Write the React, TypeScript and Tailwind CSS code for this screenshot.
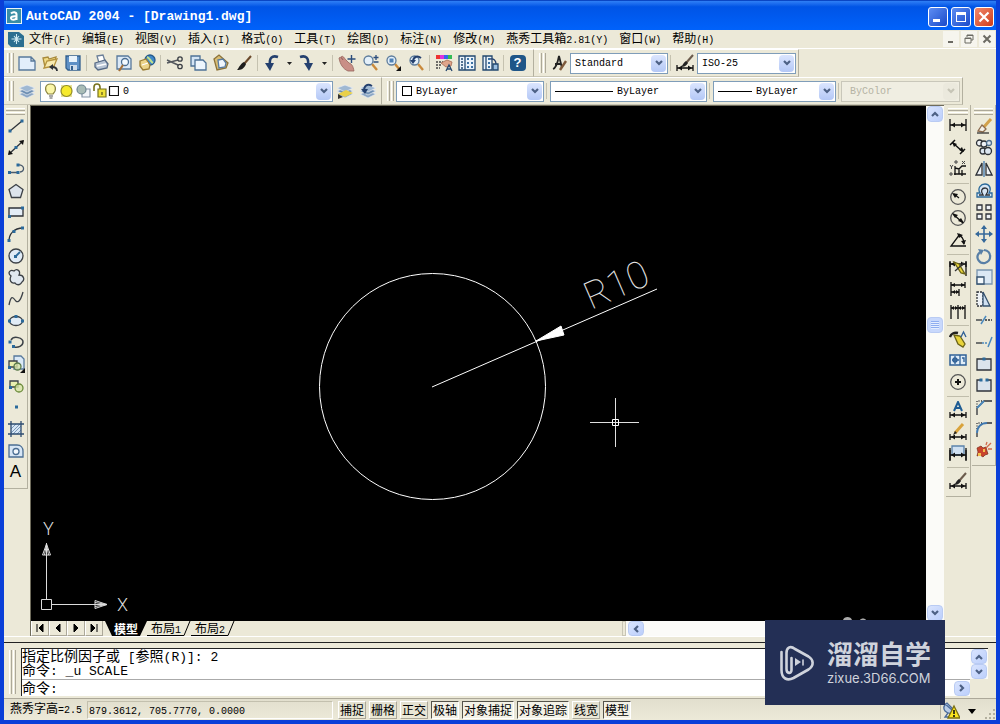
import type {ReactNode} from "react";

type Tool = {label: string; art: ReactNode;};

const INK = "#2e3238";
const BLUE = "#2b6a9b";
const PALE = "#d7e6f5";

const mono = "font-['Liberation_Mono','Noto_Sans_CJK_SC',monospace]";
const cjk = "font-['Noto_Sans_CJK_SC',sans-serif]";

/* latin is set in a 10px mono face so two letters are as wide as one 12px hanzi */
function Mixed({text, latin = "text-[10px]"}: {text: string; latin?: string;})
{
    return(
        <>
            {text.split(/([\x20-\x7e]+)/).map((part, i) => (
                i % 2 ? <span key={i} className={`whitespace-pre font-['Liberation_Mono',monospace] ${latin}`}>{part}</span> : part
            ))}
        </>
    );
}

function Art({children}: {children: ReactNode;})
{
    return(
        <svg viewBox="0 0 18 18" className="size-[18px] shrink-0" fill="none" stroke={INK} strokeWidth="1.3" aria-hidden="true">
            {children}
        </svg>
    );
}

function Dot({x, y}: {x: number; y: number;})
{
    return <rect x={x - 1.5} y={y - 1.5} width="3" height="3" fill={BLUE} stroke="none"/>;
}

/* horizontal dimension line with end ticks, shared by the dimension tools */
function DimLine({y, x1 = 1, x2 = 17, h = 3}: {y: number; x1?: number; x2?: number; h?: number;})
{
    return(
        <g stroke="#111">
            <path d={`M${x1} ${y - h}V${y + h}M${x2} ${y - h}V${y + h}M${x1} ${y}H${x2}`}/>
            <path d={`M${x1 + 1} ${y}l4 -2.500v5zM${x2 - 1} ${y}l-4 -2.500v5z`} fill="#111" stroke="none"/>
        </g>
    );
}

const glass = (
    <>
        <path d="M11 10l5 6" stroke="#c98a3c" strokeWidth="2.400"/>
        <circle cx="7.500" cy="6.500" r="4.500" fill="#e4f0fa" stroke="#5d7c9c"/>
    </>
);

const brush = (
    <>
        <path d="M16 2l-7 8" stroke="#6b4a2c" strokeWidth="2"/>
        <path d="M9 8l2 2c-2 5-5 6-9 6c2-2 3-6 7-8z" fill="#1d1d1d" stroke="none"/>
    </>
);

const layers = (
    <>
        <path d="M1 12l8-3 8 3-8 4z" fill="#8aa6c4" stroke="#e9eef4" strokeWidth="0.700"/>
        <path d="M1 9l8-3 8 3-8 4z" fill="#6e8fb3" stroke="#e9eef4" strokeWidth="0.700"/>
        <path d="M1 6l8-3 8 3-8 4z" fill="#9fb8d2" stroke="#e9eef4" strokeWidth="0.700"/>
    </>
);

const fileTools: Tool[] = [
    {label: "新建", art: <path d="M1 3h12l4 4v9H1z M13 3v4h4" fill="#e2eefb" stroke="#58799c"/>},
    {label: "打开", art: <><path d="M2 4l5-1 1 2 7-2-2 9-9 1z" fill="#f1dc86" stroke="#a88a3c"/><path d="M3 14l3-7 10-2-3 7z" fill="#f7eab0" stroke="#b4923d"/><path d="M16 17c0-3-2-4-5-4" stroke={INK} strokeWidth="1.800"/><path d="M12 10v6l-4-3z" fill={INK} stroke="none"/></>},
    {label: "保存", art: <><path d="M2 2h14v14H4l-2-2z" fill="#5e90c6" stroke="#33608f"/><path d="M5 2h8v6H5z" fill="#e9f3fc" stroke="none"/><path d="M6 11h7v5H6z" fill="#cfdcea" stroke="none"/><path d="M7 12h2v4H7z" fill="#33608f" stroke="none"/></>},
];

const printTools: Tool[] = [
    {label: "打印", art: <><path d="M5 2l6-1 2 6-6 2z" fill="#fff" stroke="#6b7f99"/><path d="M3 9l10-3 3 4-1 4-9 2-3-3z" fill="#b7c4d4" stroke="#566a85"/><path d="M5 12l9-2" stroke="#fff"/></>},
    {label: "打印预览", art: <><path d="M2 2h11l3 3v10H2z" fill="#dbe9f7" stroke="#58799c"/><circle cx="10" cy="8" r="3.500" fill="#f4faff" stroke="#4b6e93"/><path d="M8 11l-4 6" stroke="#a5713b" strokeWidth="2.200"/></>},
    {label: "发布", art: <><circle cx="12" cy="6" r="5" fill="#3f87c8" stroke="#245a8c"/><path d="M9 3c3 1 3 4 6 6" stroke="#bfe08d" strokeWidth="2"/><path d="M2 7l6-2 4 6-1 4-6 1-3-4z" fill="#ecd48a" stroke="#9a7c34"/><path d="M4 11l6-2" stroke="#fff"/></>},
];

const editTools: Tool[] = [
    {label: "剪切", art: <><path d="M1 6l11 5M1 9l11-3" stroke="#54585e" strokeWidth="1.500"/><circle cx="14" cy="5" r="2.200" stroke="#3b3f45"/><circle cx="14" cy="12.500" r="2.200" stroke="#3b3f45"/></>},
    {label: "复制", art: <><path d="M2 2h9v10H2z" fill="#d3e4f5" stroke="#4d7196"/><path d="M6 6h8l3 3v7H6z" fill="#eef6fd" stroke="#4d7196"/></>},
    {label: "粘贴", art: <><path d="M2 5l5-4 9 8-2 5-9 2z" fill="#d9bd73" stroke="#8c7238"/><path d="M6 6l5-1 3 4-1 4-6 1z" fill="#f0f6fc" stroke="#587ba0"/></>},
    {label: "特性匹配", art: brush},
];

const undoArt = <><path d="M15 3c-6-2-9 1-8 8" stroke="#24406e" strokeWidth="2.600"/><path d="M2 9h9l-4 8z" fill="#24406e" stroke="none"/></>;
const redoArt = <><path d="M2 3c6-2 9 1 8 8" stroke="#24406e" strokeWidth="2.600"/><path d="M6 9h9l-4 8z" fill="#24406e" stroke="none"/></>;

const zoomTools: Tool[] = [
    {label: "实时平移", art: <><path d="M1 4c2-2 3 1 4 2l-2-3c2-2 3 1 5 3l3 3c3 1 4 3 5 8h-6c-5-2-8-7-9-13z" fill="#c98f86" stroke="#94625a" strokeWidth="0.800"/><path d="M13.500 1v8M9.500 5h8" stroke="#2b4d7c" strokeWidth="1.400"/></>},
    {label: "实时缩放", art: <>{glass}<path d="M15 1v5M12.500 3.500h5M12.500 8h5" stroke="#2b4d7c"/></>},
    {label: "窗口缩放", art: <>{glass}<path d="M5.500 4.500h4v4h-4z" fill="#4e82b8" stroke="none"/><path d="M17 12v5h-5z" fill="#111" stroke="none"/></>},
    {label: "缩放上一个", art: <>{glass}<path d="M14 4c-4-3-8-1-8 4" stroke="#24406e" strokeWidth="2"/><path d="M3 6h6l-3 4z" fill="#24406e" stroke="none"/></>},
];

const paletteTools: Tool[] = [
    {label: "特性", art: <><path d="M1 1h4v4H1z" fill="#e33" stroke="none"/><path d="M5 1h4v4H5z" fill="#d3d" stroke="none"/><path d="M9 1h4v4H9z" fill="#36e" stroke="none"/><path d="M13 1h4v4h-4z" fill="#3b5" stroke="none"/><path d="M1 8h7M1 11h6M1 14h4" stroke="#444" strokeDasharray="2 1"/><path d="M6 9l6-3 5 2-1 4-5 1z" fill="#dfa58b" stroke="#a56a52" strokeWidth="0.800"/><path d="M11 17l3-6 3 6M12 15h4" stroke="#25486f"/></>},
    {label: "设计中心", art: <><path d="M1 2h16v14H1z" fill="#eaf3fb" stroke="#22486f"/><path d="M7 2v14" stroke="#22486f"/><path d="M3 5h2M3 8h2M3 11h2M3 14h2" stroke="#22486f"/><path d="M9 5h2M13 5h2M9 9h2M13 9h2M9 13h2M13 13h2" stroke="#3d72a4" strokeWidth="2"/></>},
    {label: "工具选项板", art: <><path d="M2 2h9v14H2z" fill="#eaf3fb" stroke="#22486f"/><path d="M5 2v14" stroke="#22486f"/><path d="M7 5h2M7 9h2M7 13h2" stroke="#3d72a4" strokeWidth="2"/><path d="M9 5c4-1 6 2 6 5" stroke="#24406e"/><path d="M12 10h5v6h-5z" fill="#9cc0e2" stroke="#22486f"/></>},
];

const drawTools: Tool[] = [
    {label: "直线", art: <><path d="M3 14L15 4"/><Dot x={3} y={14}/><Dot x={15} y={4}/></>},
    {label: "构造线", art: <><path d="M2 16L16 3"/><path d="M1 17l1-5 4 4zM17 2l-5 1 4 4z" fill="#111" stroke="none"/><Dot x={9} y={9.5}/></>},
    {label: "多段线", art: <><path d="M2 12.500h9M11 5c7-1 7 7 2 7" stroke="#4a5a6c"/><Dot x={2.5} y={12.5}/><Dot x={11} y={12.5}/><Dot x={11} y={5}/></>},
    {label: "正多边形", art: <path d="M9 2.500l7 5-2.500 8h-9L2 7.500z" fill="#dde4ec" stroke="#3c4147"/>},
    {label: "矩形", art: <><path d="M2 5h14v8H2z" fill="#e4edf6"/><Dot x={2.5} y={13.5}/><Dot x={15.5} y={5}/></>},
    {label: "圆弧", art: <><path d="M2 16c0-7 5-13 14-13"/><Dot x={2} y={15.5}/><Dot x={7} y={6.5}/><Dot x={15.5} y={3}/></>},
    {label: "圆", art: <><circle cx="9" cy="9" r="7" fill="#e0ebf6" stroke="#3c4147"/><path d="M9 9l4-4" stroke={BLUE} strokeWidth="1.800"/><Dot x={8.5} y={9.5}/></>},
    {label: "修订云线", art: <path d="M4 8c-4-3-1-7 3-5c3-3 7 0 5 4c5 0 6 5 3 7c-2 4-6 3-7 1c-4 1-6-3-4-7z" fill="#e0e8f0" stroke="#3c4147"/>},
    {label: "样条曲线", art: <path d="M2 15c2-10 4-8 6-5s5 3 8-8" stroke="#3c4147"/>},
    {label: "椭圆", art: <><ellipse cx="9" cy="9" rx="6.500" ry="4.500" fill="#e0ebf6" stroke="#3c4147"/><Dot x={2.5} y={9}/><Dot x={9} y={4.5}/><Dot x={15.5} y={9}/></>},
    {label: "椭圆弧", art: <><path d="M4 7c3-5 12-2 12 2s-5 6-9 5" stroke="#3c4147" strokeWidth="1.500"/><Dot x={3} y={9}/><Dot x={6.5} y={13.5}/></>},
    {label: "插入块", art: <><path d="M7 1h7l3 3v10H7z" fill="#dbe9f7" stroke="#58799c"/><path d="M2 6h8v6H2z" fill="#e9efb0" stroke="#3c4147"/><circle cx="10.500" cy="11.500" r="3.500" fill="#d7e3a6" fillOpacity="0.800" stroke="#5a7a4a"/><Dot x={2.5} y={12.5}/><path d="M18 13v5h-5z" fill="#111" stroke="none"/></>},
    {label: "创建块", art: <><path d="M3 4h8v6H3z" fill="#e9efb0" stroke="#3c4147"/><circle cx="12" cy="11" r="4" fill="#d7e3a6" fillOpacity="0.800" stroke="#6a8a3a"/><Dot x={3.5} y={10.5}/></>},
    {label: "点", art: <Dot x={9.5} y={9}/>},
    {label: "图案填充", art: <><path d="M4 4h10v10H4z" fill={PALE} stroke="none"/><path d="M4 9l5-5M4 13l9-9M6 14l8-8M10 14l4-4" stroke="#6f90b2" strokeWidth="0.900"/><path d="M4 1v16M14 1v16M1 4h16M1 14h16" stroke="#2d4c70"/></>},
    {label: "面域", art: <><path d="M2 3h8c4 0 6 3 6 6v6H2z" fill={PALE} stroke="#4b6e93"/><circle cx="9" cy="9.500" r="3" fill="#f4f8fc" stroke="#4b6e93"/></>},
];

const dimGroups: Tool[][] = [
    [
        {label: "线性标注", art: <DimLine y={8} h={6}/>},
        {label: "对齐标注", art: <><path d="M4 5l10 9M1 7l5-5M11 16l5-5" stroke="#111" strokeWidth="1.500"/><path d="M3 4l5 2-3 3zM15 14l-5-2 3-3z" fill="#111" stroke="none"/></>},
        {label: "坐标标注", art: <><path d="M6 6v9M6 8l4 1 3-3h4M5 14h12M10 9v5M13 10v6" stroke="#111"/><path d="M1 5l1.500 2L4 5M2.500 7v2M13 1l3 3M16 1l-3 3M6 1h2v2H6zM1 13h2v2H1z" stroke="#444" strokeWidth="1"/></>},
    ],
    [
        {label: "半径标注", art: <><circle cx="9" cy="9" r="7.300" stroke="#555"/><path d="M5 6l5 4" stroke="#111"/><path d="M3 5l6 1-3 4z" fill="#111" stroke="none"/></>},
        {label: "直径标注", art: <><circle cx="9" cy="9" r="7.300" stroke="#555"/><path d="M4 5l10 9" stroke="#111"/><path d="M3 4l6 2-3 3zM15 14l-6-2 3-3z" fill="#111" stroke="none"/></>},
        {label: "角度标注", art: <><path d="M11 3L2 15h15" stroke="#111"/><path d="M9 4c4 1 6 5 6 9" stroke="#111"/><path d="M8 2l6 2-4 3zM15 14l-3-4 5-1z" fill="#111" stroke="none"/></>},
    ],
    [
        {label: "快速标注", art: <><DimLine y={5}/><path d="M1 3v14M17 3v14" stroke="#111"/><path d="M5 3l5 2 6 10-4-1z" fill="#e8d33a" stroke="#6b6318"/><path d="M15 4L6 12" stroke="#333"/></>},
        {label: "基线标注", art: <><path d="M2 2v14M16 2v6M10 9v7" stroke="#111"/><path d="M2 5h14M2 12h8" stroke="#111"/><path d="M2 5l4-2v4zM16 5l-4-2v4zM3 12l3-2v4zM10 12l-3-2v4z" fill="#111" stroke="none"/></>},
        {label: "连续标注", art: <><path d="M2 3v14M9 3v14M16 3v14" stroke="#111"/><path d="M2 6h14" stroke="#111"/><path d="M2 6l3-2v4zM9 6l-3-2v4zM9 6l3-2v4zM16 6l-3-2v4z" fill="#111" stroke="none"/></>},
    ],
    [
        {label: "快速引线", art: <><path d="M1 7c1-3 4-5 8-4" stroke="#222" strokeWidth="2.400"/><path d="M5 5l6 1 5 8-2 3-5-3z" fill="#e8d33a" stroke="#6b6318"/><path d="M12 7l2.500-5L17 7" stroke="#2f6096"/></>},
        {label: "公差", art: <><path d="M1 4h16v10H1z" fill="#e1edf8" stroke="#2f6096" strokeWidth="1.500"/><path d="M11 4v10M6 5v8M3 9h7M13 7h2v4" stroke="#2f6096"/><circle cx="6" cy="9" r="2" stroke="#2f6096"/></>},
        {label: "圆心标记", art: <><circle cx="9" cy="9" r="7.300" stroke="#555"/><path d="M9 6v6M6 9h6" stroke="#111" strokeWidth="2"/></>},
    ],
    [
        {label: "编辑标注", art: <><path d="M5 10l4-9 4 9M6.500 7h5" stroke="#1f5c93" strokeWidth="2"/><DimLine y={14}/></>},
        {label: "编辑标注文字", art: <><DimLine y={15}/><path d="M14 2L6 11" stroke="#d9a33c" strokeWidth="3"/><path d="M6 9l-2 4 4-2z" fill="#222" stroke="none"/></>},
        {label: "标注更新", art: <><path d="M3 2h12v9H3z" fill="#cfe0f1" stroke="#5b82aa"/><path d="M1 4v13M17 4v13" stroke="#111"/><DimLine y={11} h={5}/></>},
    ],
];

const dimStyleArt = <><DimLine y={14}/><path d="M17 1l-7 8" stroke="#6b5b4c" strokeWidth="2"/><path d="M10 7l2 2c-2 3-4 4-7 4c2-2 2-4 5-6z" fill="#222" stroke="none"/></>;

const modifyTools: Tool[] = [
    {label: "删除", art: <><path d="M16 2l-8 9" stroke="#d2a14b" strokeWidth="3"/><path d="M7 8l4 4-3 3-5-1z" fill="#f3f0e8" stroke="#8b6a4d"/><path d="M2 16h12" stroke="#333"/></>},
    {label: "复制对象", art: <><circle cx="4.500" cy="5" r="3" fill="#eef2f6"/><circle cx="9" cy="6" r="3" fill="#eef2f6"/><circle cx="14" cy="5" r="2.500" fill="#dde7f1" stroke="#51708f"/><circle cx="8" cy="13" r="3" fill="#dde7f1"/><circle cx="13" cy="13" r="3.500" fill="#dde7f1"/></>},
    {label: "镜像", art: <><path d="M7 3v12H1zM11 3v12h6z" fill="#eef2f6"/><path d="M9 1v16" stroke="#3f78b0"/></>},
    {label: "偏移", art: <><path d="M2 15v-4h3c-3-5 1-9 5-9s7 4 4 9h3v4z" fill={PALE} stroke={BLUE}/><path d="M4 13h4c-3-4-1-7 2-7s4 3 1 7h4"/></>},
    {label: "阵列", art: <path d="M2 2h5v5H2zM11 2h5v5h-5zM2 11h5v5H2zM11 11h5v5h-5z" fill="#eef2f6"/>},
    {label: "移动", art: <><path d="M9 2v14M2 9h14" stroke="#35689a" strokeWidth="1.600"/><path d="M9 0l3 4H6zM9 18l3-4H6zM0 9l4-3v6zM18 9l-4-3v6z" fill="#35689a" stroke="none"/></>},
    {label: "旋转", art: <><path d="M5 5c-6 6 0 12 5 11c7-2 7-12-1-13" stroke="#587fa6" strokeWidth="2.200"/><path d="M3 2l6 1-3 5z" fill="#587fa6" stroke="none"/></>},
    {label: "缩放", art: <><path d="M2 2h15v14H2z" fill="#dbe8f4" stroke="#7a95b0"/><path d="M2 9h7v7H2z" fill="#f3f8fc" stroke="#35516e"/></>},
    {label: "拉伸", art: <><path d="M2 2h6v14H2z" fill="#eef2f6" strokeDasharray="2 1"/><path d="M8 2l7 14H8z" fill="#cfe0f1" stroke="#35516e"/></>},
    {label: "修剪", art: <><path d="M1 9h6" stroke={INK}/><path d="M10 9h7" strokeDasharray="2 1"/><path d="M6 13l5-8" stroke="#4b89bd" strokeWidth="1.500"/></>},
    {label: "延伸", art: <><path d="M1 10h6"/><path d="M7 10h6" strokeDasharray="2 1" stroke="#4b89bd"/><path d="M13 14l4-10" stroke="#4b89bd" strokeWidth="1.500"/></>},
    {label: "打断于点", art: <><path d="M2 4h14v11H2z" fill="#dbe3ec"/><Dot x={9} y={4}/></>},
    {label: "打断", art: <><path d="M6 4H2v11h14V4h-4" fill="#dbe3ec"/><Dot x={6} y={4}/><Dot x={12} y={4}/></>},
    {label: "倒角", art: <><path d="M2 17v-7l7-7h8"/><path d="M2 9V3h6" strokeDasharray="1 1.500"/><path d="M2 10l7-7" stroke="#4b89bd" strokeWidth="1.800"/></>},
    {label: "圆角", art: <><path d="M2 17v-4M12 3h5"/><path d="M2 9V3h6" strokeDasharray="1 1.500"/><path d="M2 13c0-6 4-10 10-10" stroke="#3f78b0" strokeWidth="1.800"/></>},
    {label: "分解", art: <><path d="M2 7l4-2 2 2 3-1 1 4 1 3-3 1-2 2-3-2-3 1 1-4z" fill="#c9442c" stroke="#7a2a1a" strokeWidth="0.700"/><path d="M3 12h3v3H3zM8 8h2v3H8z" fill="#f2c14e" stroke="none"/><path d="M11 7l5-5M13 8h4M11 4l1-3" stroke="#d06b4c"/></>},
];

const menus = ["文件(F)", "编辑(E)", "视图(V)", "插入(I)", "格式(O)", "工具(T)", "绘图(D)", "标注(N)", "修改(M)", "燕秀工具箱2.81(Y)", "窗口(W)", "帮助(H)"];

const modes = [
    {label: "捕捉", on: false},
    {label: "栅格", on: false},
    {label: "正交", on: false},
    {label: "极轴", on: true},
    {label: "对象捕捉", on: true},
    {label: "对象追踪", on: true},
    {label: "线宽", on: false},
    {label: "模型", on: true},
];

function ToolButton({label, art}: Tool)
{
    return(
        <button type="button" aria-label={label} title={label} className="flex w-[23px] shrink-0 items-center justify-center">
            <Art>{art}</Art>
        </button>
    );
}

function Tools({items}: {items: Tool[];})
{
    return <>{items.map((t) => <ToolButton key={t.label} {...t}/>)}</>;
}

function Grip()
{
    return(
        <span className="flex gap-px px-px py-0.5">
            <span className="w-[3px] border-r border-l border-r-[#aca899] border-l-white"/>
            <span className="w-[3px] border-r border-l border-r-[#aca899] border-l-white"/>
        </span>
    );
}

function TopGrip()
{
    return(
        <span className="flex h-2 w-full flex-col gap-px px-0.5 pt-px">
            <span className="h-[3px] border-t border-b border-t-white border-b-[#aca899]"/>
            <span className="h-[3px] border-t border-b border-t-white border-b-[#aca899]"/>
        </span>
    );
}

function Sep()
{
    return <span className="mx-0.5 my-1 w-px shrink-0 bg-[#c5c2b0]"/>;
}

function DropMark()
{
    return(
        <button type="button" aria-label="更多" className="flex w-3 items-center justify-center">
            <svg viewBox="0 0 5 3" className="h-[3px] w-[5px]" aria-hidden="true"><path d="M0 0h5L2.500 3z" fill="#222"/></svg>
        </button>
    );
}

function Bar({children}: {children: ReactNode;})
{
    return <div className="flex items-stretch border-t border-r border-b border-t-white border-r-[#b3b09f] border-b-[#c9c6b5] py-px pl-0.5">{children}</div>;
}

function Chevron({dir, faded = false}: {dir: "up" | "down" | "left" | "right"; faded?: boolean;})
{
    const d = {up: "M2 7l3-3 3 3", down: "M2 3l3 3 3-3", left: "M7 2L4 5l3 3", right: "M3 2l3 3-3 3"}[dir];
    return(
        <svg viewBox="0 0 10 10" className="size-[10px]" fill="none" stroke={faded ? "#c6c4b6" : "#4d6185"} strokeWidth="2.200" aria-hidden="true">
            <path d={d}/>
        </svg>
    );
}

function Combo({label, value, width, prefix, disabled = false}: {label: string; value: string; width: string; prefix?: ReactNode; disabled?: boolean;})
{
    return(
        <div className={`my-auto flex h-[21px] shrink-0 items-center border ${width} ${disabled ? "border-[#c9c7ba] bg-[#f0eee2]" : "border-[#7f9db9] bg-white"}`}>
            {prefix}
            <select aria-label={label} disabled={disabled} defaultValue={value} className={`h-full min-w-0 flex-1 appearance-none bg-transparent pt-px text-[10px] leading-[18px] outline-none ${mono} ${disabled ? "pl-2 text-[#b5b3a4]" : "pl-1 text-black"}`}>
                <option>{value}</option>
            </select>
            <span className={`pointer-events-none mr-px flex h-[17px] w-[15px] items-center justify-center rounded-sm ${disabled ? "bg-[#ebe9dd]" : "bg-linear-to-b from-[#dbe5fe] to-[#b4c8f6]"}`}>
                <Chevron dir="down" faded={disabled}/>
            </span>
        </div>
    );
}

function ScrollButton({label, dir, size = "size-4"}: {label: string; dir: "up" | "down" | "left" | "right"; size?: string;})
{
    return(
        <button type="button" aria-label={label} className={`flex shrink-0 items-center justify-center rounded-sm border border-[#b9cbf3] bg-linear-to-br from-[#d9e4fe] to-[#bccffb] ${size}`}>
            <Chevron dir={dir}/>
        </button>
    );
}

function TitleBar()
{
    const base = "flex size-5 items-center justify-center rounded-[3px] border border-white";
    return(
        <header className="flex h-[30px] shrink-0 items-center border-t border-[#0a46c4] bg-linear-to-b from-[#2f7ff5] via-[#0054e6] via-20% to-[#0062fb] px-0.5">
            <svg viewBox="0 0 16 16" className="size-4" aria-hidden="true">
                <path d="M0 0h16v16H0z" fill="#e8f4f8"/>
                <path d="M1 1h14v14H1z" fill="#3a8ea6"/>
                <path d="M5 5.500c2-2 5.500-1.500 5.500 1V12M10.500 8.500C6 8 4.500 9 5 10.500s4 2 5.500-.5" fill="none" stroke="#fff" strokeWidth="2"/>
            </svg>
            <h1 className="ml-1 flex-1 truncate pt-0.5 font-['Liberation_Mono',monospace] text-[13px] leading-4 font-bold text-white">AutoCAD 2004 - [Drawing1.dwg]</h1>
            <div className="flex gap-[3px] pt-0.5">
                <button type="button" aria-label="最小化" className={`${base} bg-linear-to-br from-[#5e8df3] to-[#1a49c9]`}>
                    <svg viewBox="0 0 16 16" className="size-4" aria-hidden="true"><path d="M3 10h7v3H3z" fill="#fff"/></svg>
                </button>
                <button type="button" aria-label="最大化" className={`${base} bg-linear-to-br from-[#5e8df3] to-[#1a49c9]`}>
                    <svg viewBox="0 0 16 16" className="size-4" aria-hidden="true"><path d="M3 3h10v10H3zM4 6v6h8V6z" fill="#fff" fillRule="evenodd"/></svg>
                </button>
                <button type="button" aria-label="关闭" className={`${base} bg-linear-to-br from-[#f0876a] to-[#cf3a14]`}>
                    <svg viewBox="0 0 16 16" className="size-4" aria-hidden="true"><path d="M3.500 3.500l9 9M12.500 3.500l-9 9" stroke="#fff" strokeWidth="2.200"/></svg>
                </button>
            </div>
        </header>
    );
}

function MenuBar()
{
    const mdi = "flex size-4 items-center justify-center bg-[#f6f5ee]";
    return(
        <nav className={`flex h-[19px] shrink-0 items-center border-b border-white pl-1 text-[12px] leading-[18px] text-black ${cjk}`}>
            <svg viewBox="0 0 16 16" className="mr-[5px] size-4" aria-hidden="true">
                <path d="M0 1h11l5 4v11H3l-3-3z" fill="#2b6e91"/>
                <path d="M8.500 3v10M3.500 8h10M6 5l5 6M11 5l-5 6" stroke="#cfeaf3" strokeWidth="1.100"/>
            </svg>
            <div className="flex flex-1 gap-[11px]">
                {menus.map((m) => (
                    <button key={m} type="button" className="whitespace-nowrap"><Mixed text={m}/></button>
                ))}
            </div>
            <div className="flex gap-0.5 pr-px">
                <button type="button" aria-label="最小化文档" className={mdi}><svg viewBox="0 0 10 10" className="size-[10px]" aria-hidden="true"><path d="M2 7h5v2H2z" fill="#6b6a63"/></svg></button>
                <button type="button" aria-label="还原文档" className={mdi}><svg viewBox="0 0 10 10" className="size-[10px]" fill="none" stroke="#6b6a63" aria-hidden="true"><path d="M3 3V1h6v5H7M1 4h6v5H1zM1 4.500h6M3 1.500h6"/></svg></button>
                <button type="button" aria-label="关闭文档" className={mdi}><svg viewBox="0 0 10 10" className="size-[10px]" stroke="#6b6a63" strokeWidth="2" aria-hidden="true"><path d="M1.500 1.500l7 7M8.500 1.500l-7 7"/></svg></button>
            </div>
        </nav>
    );
}

function StandardBars()
{
    return(
        <div className="flex h-7 shrink-0">
            <Bar>
                <Grip/>
                <Tools items={fileTools}/>
                <Sep/>
                <Tools items={printTools}/>
                <Sep/>
                <Tools items={editTools}/>
                <Sep/>
                <ToolButton label="放弃" art={undoArt}/>
                <DropMark/>
                <ToolButton label="重做" art={redoArt}/>
                <DropMark/>
                <Sep/>
                <Tools items={zoomTools}/>
                <Sep/>
                <Tools items={paletteTools}/>
                <Sep/>
                <button type="button" aria-label="帮助" className="mr-1 flex w-[23px] items-center justify-center">
                    <span className="flex size-4 items-center justify-center rounded-sm bg-[#1f5688] font-['Liberation_Sans',sans-serif] text-[13px] leading-4 font-bold text-white">?</span>
                </button>
            </Bar>
            <Bar>
                <span className="w-0.5"/>
                <Grip/>
                <button type="button" aria-label="文字样式" className="flex w-[23px] items-center justify-center">
                    <Art><path d="M3 15c3-1 5-8 6-13l3 12M5 10h6" stroke="#222" strokeWidth="1.800"/><path d="M16 7l-6 9" stroke="#7d5a3c" strokeWidth="2.400"/></Art>
                </button>
                <Combo label="文字样式控制" value="Standard" width="w-[98px]"/>
                <Sep/>
                <ToolButton label="标注样式" art={dimStyleArt}/>
                <span className="w-px"/>
                <Combo label="标注样式控制" value="ISO-25" width="w-[99px]"/>
                <span className="w-0.5"/>
            </Bar>
        </div>
    );
}

function LayerBars()
{
    return(
        <div className="flex h-7 shrink-0">
            <Bar>
                <Grip/>
                <ToolButton label="图层特性管理器" art={layers}/>
                <span className="w-0.5"/>
                <Combo label="图层" value="0" width="w-[293px]" prefix={
                    <svg viewBox="0 0 78 18" className="h-[18px] w-[78px] shrink-0" fill="none" strokeWidth="1.200" aria-hidden="true">
                        <path d="M7 12C3 8 4 2 9.500 2S16 8 12 12z" fill="#fbf6a8" stroke="#8a8440"/>
                        <path d="M8 14h4M8.500 16h3" stroke="#555"/>
                        <path d="M20 3h11v12H20z" fill="#e8e39a"/>
                        <circle cx="25.500" cy="9" r="5.500" fill="#f6ea2c" stroke="#8f8a2a"/>
                        <path d="M41 7h8v8h-8z" fill="#f2f5f8" stroke="#8494a6"/>
                        <circle cx="40.500" cy="7.500" r="4.500" fill="#a9bcb6" stroke="#6f8791"/>
                        <path d="M53 9V5c0-4 6-4 6 0v5" stroke="#77721f" strokeWidth="1.600"/>
                        <path d="M57 7h8v8h-8z" fill="#efe23a" stroke="#77721f"/>
                        <path d="M61 10v3" stroke="#55511a"/>
                        <path d="M68.500 4.500h9v9h-9z" fill="#fff" stroke="#111"/>
                    </svg>
                }/>
                <ToolButton label="将对象的图层置为当前" art={<>{layers}<path d="M2 12l8-4 7 3-8 4z" fill="#e9d04a" stroke="none"/><path d="M2 12v5l5-2" fill="#333" stroke="none"/></>}/>
                <ToolButton label="上一个图层" art={<>{layers}<path d="M13 4c-5-3-8 0-8 5" stroke="#24406e" strokeWidth="2"/><path d="M2 7h7l-3 5z" fill="#24406e" stroke="none"/></>}/>
                <span className="w-0.5"/>
            </Bar>
            <Bar>
                <span className="w-0.5"/>
                <Grip/>
                <span className="w-px"/>
                <Combo label="颜色" value="ByLayer" width="w-[148px]" prefix={<span className="ml-[5px] size-[10px] shrink-0 border border-black bg-white"/>}/>
                <Sep/>
                <span className="w-px"/>
                <Combo label="线型" value="ByLayer" width="w-[157px]" prefix={<span className="ml-1 h-px w-[58px] shrink-0 bg-black"/>}/>
                <Sep/>
                <span className="w-px"/>
                <Combo label="线宽控制" value="ByLayer" width="w-[123px]" prefix={<span className="ml-1 h-px w-[34px] shrink-0 bg-black"/>}/>
                <Sep/>
                <Combo label="打印样式" value="ByColor" width="w-[119px]" disabled/>
                <span className="w-0.5"/>
            </Bar>
        </div>
    );
}

function Canvas()
{
    return(
        <div className="relative min-w-0 flex-1 overflow-hidden bg-black">
            <svg className="absolute inset-0 h-full w-full" fill="none" stroke="#fff" role="img" aria-label="半径为 10 的圆">
                <circle cx="401.500" cy="280.500" r="113"/>
                <path d="M401 281L626 183"/>
                <path d="M505 235l25-15 3 9z" fill="#fff"/>
                <text x="560" y="204" transform="rotate(-23.500 560 204)" fill="#e8e8e8" stroke="none" className="font-['Roboto',sans-serif] text-[38px] font-thin">R10</text>
                <path d="M559 316.500h49M584.500 292v49" stroke="#e0e0e0"/>
                <path d="M581.500 313.500h6v6h-6z"/>
            </svg>
            <svg className="absolute bottom-0 left-0 h-[110px] w-[110px]" fill="none" stroke="#dcdcdc" role="img" aria-label="坐标系图标">
                <path d="M10.500 88.500h10v10h-10zM15.500 88V32M21 93.500h55"/>
                <path d="M15.500 33l-4 11h8zM15.500 33l-2 11M15.500 33l2 11M76 93.500l-12-4v8zM76 93.500l-12-2M76 93.500l-12 2"/>
                <text x="12" y="24" fill="#dcdcdc" stroke="none" className="font-['Roboto',sans-serif] text-[18px] font-light">Y</text>
                <text x="86" y="100" fill="#dcdcdc" stroke="none" className="font-['Roboto',sans-serif] text-[18px] font-light">X</text>
            </svg>
        </div>
    );
}

function LayoutTabs()
{
    const nav = [
        {label: "第一个", d: "M2 1v8M8 1v8L4 5z"},
        {label: "上一个", d: "M7 1v8L3 5z"},
        {label: "下一个", d: "M3 1v8l4-4z"},
        {label: "最后一个", d: "M8 1v8M2 1v8l4-4z"},
    ];
    return(
        <div className={`flex h-[15px] shrink-0 text-[12px] leading-[14px] text-black ${cjk}`}>
            {nav.map((n) => (
                <button key={n.label} type="button" aria-label={n.label} className="flex w-[18px] items-center justify-center border-r border-b border-l border-r-[#aca899] border-b-[#aca899] border-l-white">
                    <svg viewBox="0 0 10 10" className="size-[10px]" fill="#000" stroke="#000" strokeWidth="1" aria-hidden="true"><path d={n.d}/></svg>
                </button>
            ))}
            <button type="button" className="relative ml-0.5 w-[42px] text-center font-bold text-white">
                <svg viewBox="0 0 42 15" className="absolute inset-0 h-full w-full" aria-hidden="true"><path d="M0 0h42l-7 15H7z" fill="#000"/></svg>
                <span className="relative">模型</span>
            </button>
            {["布局1", "布局2"].map((t) => (
                <button key={t} type="button" className="relative w-11 pl-1 text-left">
                    <svg viewBox="0 0 44 15" className="absolute inset-0 h-full w-full" fill="none" stroke="#000" aria-hidden="true"><path d="M0 14.500h37L43 0"/></svg>
                    <span className="relative"><Mixed text={t}/></span>
                </button>
            ))}
            <span className="flex-1"/>
            <div className="flex w-[304px] bg-[#fbfbf8]">
                <span className="mr-0.5 w-1 border border-[#c9c6b5] bg-[#ece9d8]"/>
                <ScrollButton label="向左滚动" dir="left" size="h-[15px] w-4"/>
            </div>
            <span className="w-[18px] bg-[#ece9d8]"/>
        </div>
    );
}

function Workspace()
{
    return(
        <main className="flex min-h-0 flex-1">
            <aside className="w-[26px] shrink-0">
                <div className="w-6 border-r border-b border-[#b3b09f] pt-0.5 pb-[5px]">
                    <TopGrip/>
                    <div className="grid h-[368px] auto-rows-fr">
                        <Tools items={drawTools}/>
                        <button type="button" aria-label="多行文字" className="w-[23px] font-['Liberation_Sans',sans-serif] text-[17px] leading-5 text-black">A</button>
                    </div>
                </div>
            </aside>
            <section className="flex min-w-0 flex-1 flex-col border-t border-l border-[#6f6c5c]">
                <div className="flex min-h-0 flex-1">
                    <Canvas/>
                    <div className="flex w-[18px] shrink-0 flex-col items-center bg-[#fbfbf8]">
                        <ScrollButton label="向上滚动" dir="up"/>
                        <span className="grow-[5]"/>
                        <span className="flex size-4 items-center justify-center rounded-sm border border-[#b9cbf3] bg-[#c8d8fc]">
                            <span className="size-2 bg-[repeating-linear-gradient(#8fadf0_0_1px,#e6eefe_1px_2px)]"/>
                        </span>
                        <span className="grow-[7]"/>
                        <ScrollButton label="向下滚动" dir="down"/>
                    </div>
                </div>
                <LayoutTabs/>
            </section>
            <aside className="flex shrink-0 items-start gap-px pl-0.5">
                <div className="w-[25px] border-r border-b border-[#b3b09f] pt-0.5 pb-1">
                    <TopGrip/>
                    {dimGroups.map((group) => (
                        <div key={group[0].label}>
                            <div className="grid h-[65px] auto-rows-fr"><Tools items={group}/></div>
                            <div className="flex h-1.5 items-center px-px"><span className="h-px w-full bg-[#c0bdab]"/></div>
                        </div>
                    ))}
                    <div className="grid h-[22px]"><ToolButton label="标注样式管理器" art={dimStyleArt}/></div>
                </div>
                <div className="w-6 border-r border-b border-[#b3b09f] pt-0.5 pb-1">
                    <TopGrip/>
                    <div className="grid h-[346px] auto-rows-fr"><Tools items={modifyTools}/></div>
                </div>
            </aside>
        </main>
    );
}

function CommandWindow()
{
    return(
        <section className="flex h-[55px] shrink-0 pt-[5px] pr-2 pb-0.5 pl-1">
            <Grip/>
            <div className={`ml-1 flex min-w-0 flex-1 border-t border-l border-[#222] bg-white text-[14px] leading-[13px] text-black ${cjk}`}>
                <div className="flex min-w-0 flex-1 flex-col">
                    <div className="h-[31px] border-b border-[#aaa]" aria-live="polite">
                        <p className="h-[14px] whitespace-nowrap"><Mixed text="指定比例因子或 [参照(R)]: 2" latin="text-[13px]"/></p>
                        <p className="h-[14px] whitespace-nowrap"><Mixed text="命令: _u SCALE" latin="text-[13px]"/></p>
                    </div>
                    <div className="flex h-4 items-center">
                        <label htmlFor="command" className="whitespace-nowrap"><Mixed text="命令:" latin="text-[13px]"/></label>
                        <input id="command" className="h-4 min-w-0 flex-1 bg-transparent pl-1 outline-none"/>
                        <ScrollButton label="向右滚动命令行" dir="right" size="h-[15px] w-4"/>
                    </div>
                </div>
                <div className="flex w-[18px] flex-col items-center bg-[#fbfbf8]">
                    <ScrollButton label="向上滚动命令" dir="up" size="h-[15px] w-4"/>
                    <ScrollButton label="向下滚动命令" dir="down" size="h-[15px] w-4"/>
                    <span className="w-full flex-1 bg-[#ece9d8]"/>
                </div>
            </div>
        </section>
    );
}

function StatusBar()
{
    return(
        <footer className={`flex h-[22px] shrink-0 items-center border-t border-[#aca899] bg-linear-to-b from-[#e2dfce] to-[#ece9d8] pl-1.5 text-[12px] leading-[18px] text-black ${cjk}`}>
            <span className="w-[77px] whitespace-nowrap"><Mixed text="燕秀字高=2.5"/></span>
            <span className="h-[18px] w-[246px] border border-[#c3c0ae] border-r-white border-b-white pl-px leading-[14px] whitespace-nowrap"><Mixed text="879.3612, 705.7770, 0.0000"/></span>
            <div className="ml-[5px] flex gap-[3px]">
                {modes.map((m) => (
                    <button key={m.label} type="button" aria-pressed={m.on} className={`h-[18px] border px-px leading-4 whitespace-nowrap ${m.on ? "border-t-[#55534a] border-r-white border-b-white border-l-[#55534a] bg-[#f3f1e6]" : "border-t-white border-r-[#aca899] border-b-[#aca899] border-l-white"}`}>
                        {m.label}
                    </button>
                ))}
            </div>
            <span className="flex-1"/>
            <button type="button" aria-label="通讯中心" className="border-l border-[#b3b09f] pl-px">
                <Art>
                    <path d="M2 2l8 7M3 10c-2-3-1-6 2-8l8 8c-3 3-7 3-10 0z" fill="#b9cce6" stroke="#4a6a9a"/>
                    <path d="M6 12l-3 4h6" stroke="#4a6a9a"/>
                    <path d="M12 5l6 12H6z" fill="#fbe51e" stroke="#7c7010"/>
                    <path d="M12 9v4M12 14v2" stroke="#111" strokeWidth="1.600"/>
                </Art>
            </button>
            <button type="button" aria-label="状态栏菜单" className="flex w-6 justify-center pt-1">
                <svg viewBox="0 0 8 5" className="h-[5px] w-2" aria-hidden="true"><path d="M0 0h8L4 5z" fill="#000"/></svg>
            </button>
            <svg viewBox="0 0 12 12" className="size-3 self-end" fill="#b3b09f" aria-hidden="true">
                <path d="M9 1h2v2H9zM9 5h2v2H9zM9 9h2v2H9zM5 5h2v2H5zM5 9h2v2H5zM1 9h2v2H1z"/>
            </svg>
        </footer>
    );
}

function Badge()
{
    return(
        <div className="absolute right-[55px] bottom-[19px] flex h-[85px] w-[180px] items-center bg-[#232f55] pl-3.5 text-[#cfd3dc]">
            <svg viewBox="0 0 26 4" className="absolute bottom-full left-[77px] h-1 w-[26px]" aria-hidden="true">
                <path d="M1 4c1-4 8-4 9 0zM18 4c1-2 5-2 6 0z" fill="#aaa"/>
            </svg>
            <svg viewBox="0 0 36 38" className="h-[38px] w-9 shrink-0" fill="none" stroke="currentColor" strokeLinecap="round" strokeLinejoin="round" aria-hidden="true">
                <path d="M2.500 8v18c0 9 6 11 12 8l15-8.500c6-4 5-10 0-13L16 5C11 1 7.500 4 7.500 9v16c0 5 5 5 5 1V14" strokeWidth="2.600"/>
                <path d="M16 14v8l6-4z" fill="currentColor" stroke="none"/>
                <path d="M24 16v5" strokeWidth="1.600"/>
            </svg>
            <div className="ml-3 pb-1">
                <p className={`text-[26px] leading-[30px] font-bold whitespace-nowrap ${cjk}`}>溜溜自学</p>
                <p className="pt-1 font-['Inter',sans-serif] text-[13px] leading-3 whitespace-nowrap">zixue.3D66.COM</p>
            </div>
        </div>
    );
}

export default function App()
{
    return(
        <div className="relative flex h-screen min-h-[600px] w-full flex-col overflow-hidden bg-[#0a3fd8] px-1 pb-1">
            <TitleBar/>
            <div className="flex min-h-0 flex-1 flex-col bg-[#ece9d8]">
                <MenuBar/>
                <StandardBars/>
                <LayerBars/>
                <Workspace/>
                <div className="h-[7px] shrink-0 border-t border-b border-t-white border-b-[#222]"/>
                <CommandWindow/>
                <StatusBar/>
            </div>
            <Badge/>
        </div>
    );
}
